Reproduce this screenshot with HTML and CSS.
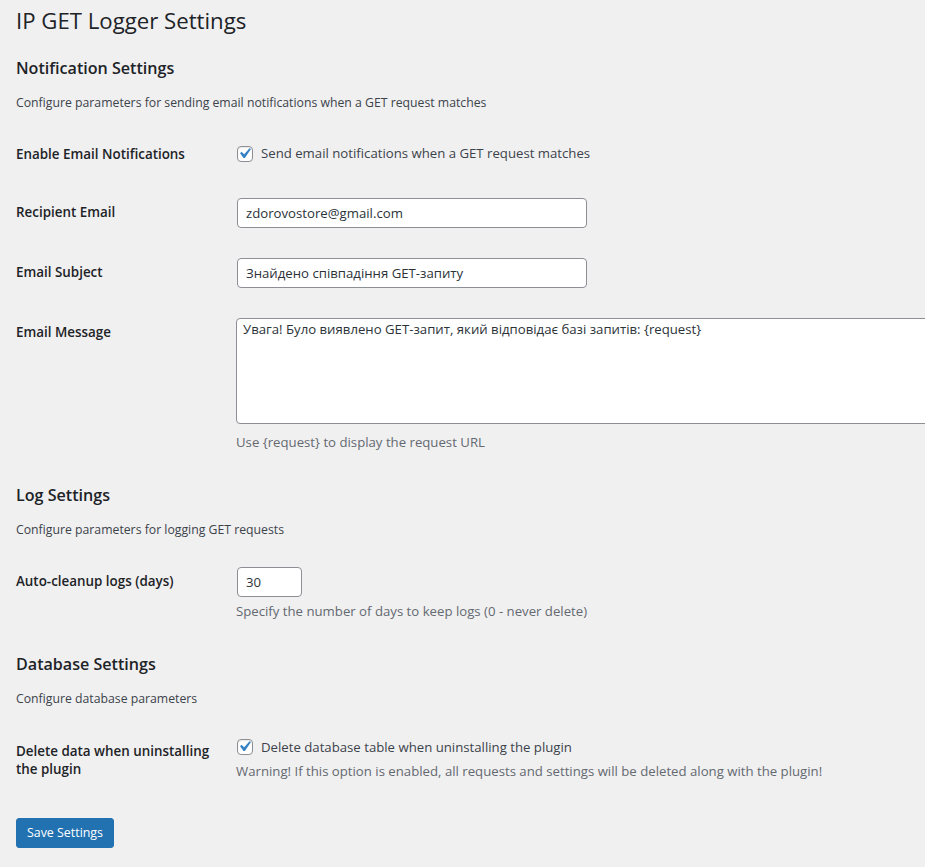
FILE: index.html
```html
<!DOCTYPE html>
<html lang="en">
<head>
<meta charset="utf-8">
<title>IP GET Logger Settings</title>
<link rel="stylesheet" href="styles.css">
</head>
<body>
<div class="wrap">
  <h1>IP GET Logger Settings</h1>
  <form>
    <h2>Notification Settings</h2>
    <p class="section-desc">Configure parameters for sending email notifications when a GET request matches</p>
    <table class="form-table">
      <tr>
        <th>Enable Email Notifications</th>
        <td>
          <label class="check check-tall"><span class="cb"><svg viewBox="0 0 20 20" width="21" height="21"><path d="M14.83 4.89l1.34.94-5.81 8.38H9.02L5.78 9.67l1.34-1.25 2.57 2.4z" fill="#3582c4"/></svg></span>Send email notifications when a GET request matches</label>
        </td>
      </tr>
      <tr>
        <th>Recipient Email</th>
        <td><input class="text-input regular" type="text" value="zdorovostore@gmail.com"></td>
      </tr>
      <tr>
        <th>Email Subject</th>
        <td><input class="text-input regular" type="text" value="Знайдено співпадіння GET-запиту"></td>
      </tr>
      <tr>
        <th>Email Message</th>
        <td>
          <textarea class="large-text" rows="5">Увага! Було виявлено GET-запит, який відповідає базі запитів: {request}</textarea>
          <p class="description after-area">Use {request} to display the request URL</p>
        </td>
      </tr>
    </table>

    <h2>Log Settings</h2>
    <p class="section-desc">Configure parameters for logging GET requests</p>
    <table class="form-table">
      <tr>
        <th>Auto-cleanup logs (days)</th>
        <td>
          <input class="text-input small" type="number" value="30">
          <p class="description after-input">Specify the number of days to keep logs (0 - never delete)</p>
        </td>
      </tr>
    </table>

    <h2>Database Settings</h2>
    <p class="section-desc">Configure database parameters</p>
    <table class="form-table db-table">
      <tr>
        <th>Delete data when uninstalling the plugin</th>
        <td>
          <label class="check check-short"><span class="cb"><svg viewBox="0 0 20 20" width="21" height="21"><path d="M14.83 4.89l1.34.94-5.81 8.38H9.02L5.78 9.67l1.34-1.25 2.57 2.4z" fill="#3582c4"/></svg></span>Delete database table when uninstalling the plugin</label>
          <p class="description">Warning! If this option is enabled, all requests and settings will be deleted along with the plugin!</p>
        </td>
      </tr>
    </table>

    <p class="submit"><button type="button" class="button-primary">Save Settings</button></p>
  </form>
</div>
</body>
</html>
```

FILE: styles.css
```css
html, body {
  margin: 0;
  padding: 0;
  overflow-x: hidden;
}
body {
  background: #f0f0f1;
  color: #3c434a;
  font-family: "Open Sans", "Noto Sans", sans-serif;
  font-size: 12.3px;
  line-height: 1.4;
  min-height: 867px;
}
.wrap {
  padding: 0 0 0 16px;
}
h1 {
  margin: 0;
  padding: 6px 0 4px;
  font-size: 22.2px;
  font-weight: 400;
  line-height: 30px;
  color: #1d2327;
}
h2 {
  margin: 17px 0 14px;
  font-size: 16.1px;
  font-weight: 600;
  line-height: 22px;
  color: #1d2327;
}
.section-desc {
  margin: 0 0 12px;
  font-size: 12.25px;
  line-height: 19.5px;
  color: #3c434a;
}
.form-table {
  border-collapse: collapse;
  table-layout: fixed;
  width: 100%;
  margin: 0;
}
.db-table { margin-top: 13px; }
.form-table th {
  width: 200px;
  padding: 20px 10px 20px 0;
  text-align: left;
  vertical-align: top;
  font-size: 13.4px;
  font-weight: 600;
  line-height: 18.2px;
  color: #1d2327;
}
.form-table td {
  padding: 15px 10px;
  vertical-align: top;
  font-size: 13.2px;
  line-height: 18.2px;
  color: #3c434a;
}
.check {
  display: flex;
  align-items: center;
  color: #3c434a;
}
.check-tall { height: 28px; }
.check-short { height: 21.5px; }
.cb {
  position: relative;
  flex: none;
  width: 14px;
  height: 14px;
  margin: 0 8px 0 1px;
  border: 1px solid #8c8f94;
  border-radius: 4px;
  background: #fff;
  box-shadow: inset 0 1px 2px rgba(0,0,0,.1);
}
.cb svg {
  position: absolute;
  left: -4px;
  top: -4px;
}
.text-input {
  display: block;
  box-sizing: border-box;
  height: 30px;
  margin: 0;
  padding: 0 8px;
  font-family: inherit;
  font-size: 13.2px;
  line-height: 28px;
  color: #2c3338;
  background: #fff;
  border: 1px solid #8c8f94;
  border-radius: 4px;
}
.regular { width: 350px; margin-left: 1px; }
.small { width: 65px; margin-left: 1px; -moz-appearance: textfield; }
.small::-webkit-inner-spin-button,
.small::-webkit-outer-spin-button { -webkit-appearance: none; margin: 0; }
.large-text {
  display: block;
  box-sizing: border-box;
  width: 720px;
  height: 106px;
  margin: 0;
  padding: 0 6px;
  font-family: inherit;
  font-size: 13.2px;
  line-height: 20px;
  color: #2c3338;
  background: #fff;
  border: 1px solid #8c8f94;
  border-radius: 4px;
  resize: none;
}
.description {
  margin: 4px 0 0;
  font-size: 13.2px;
  line-height: 19.5px;
  color: #646970;
}
.after-area { margin-top: 9px; }
.after-input { margin-top: 5px; }
.submit {
  margin: 20px 0 0;
  padding: 0;
}
.button-primary {
  box-sizing: border-box;
  height: 30px;
  padding: 0 10px;
  font-family: inherit;
  font-size: 12.4px;
  line-height: 28px;
  color: #fff;
  background: #2271b1;
  border: 1px solid #2271b1;
  border-radius: 3px;
  cursor: pointer;
}
```
